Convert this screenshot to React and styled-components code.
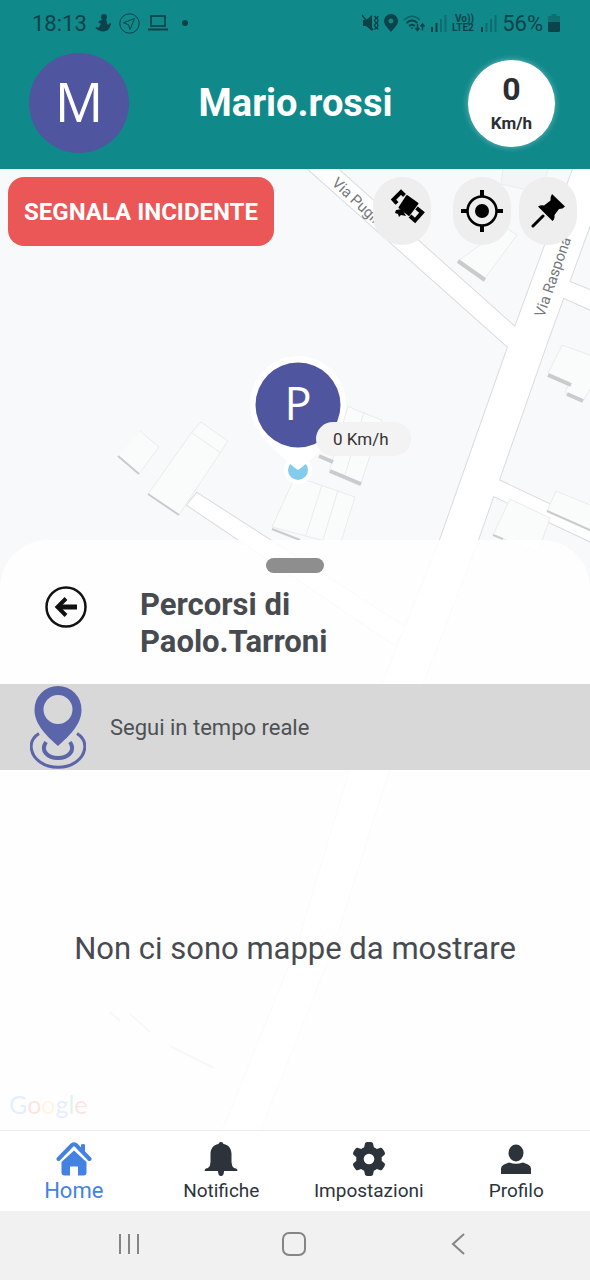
import React from "react";
import styled, { createGlobalStyle } from "styled-components";
import { FaGear } from "react-icons/fa6";

export default function App() {
  return (
    <>
      <GlobalStyle />
      <Screen>
        <Header>
          <StatusBar />
          <ProfileRow>
            <Avatar>M</Avatar>
            <UserName>Mario.rossi</UserName>
            <Speed>
              <SpeedValue>0</SpeedValue>
              <SpeedUnit>Km/h</SpeedUnit>
            </Speed>
          </ProfileRow>
        </Header>
        <MapArea>
          <MapBackdrop />
          <MapView>
            <Toolbar>
              <ReportButton type="button">SEGNALA INCIDENTE</ReportButton>
              <MapButtons>
                <MapButton type="button" aria-label="Satellite" $spaced>
                  <SatelliteIcon />
                </MapButton>
                <MapButton type="button" aria-label="La mia posizione">
                  <TargetIcon />
                </MapButton>
                <MapButton type="button" aria-label="Fissa">
                  <PinIcon />
                </MapButton>
              </MapButtons>
            </Toolbar>
            <UserMarker initial="P" speed="0 Km/h" />
          </MapView>
          <Sheet>
            <Grip />
            <SheetHead>
              <BackButton type="button" aria-label="Indietro">
                <BackIcon />
              </BackButton>
              <SheetTitle>Percorsi di Paolo.Tarroni</SheetTitle>
            </SheetHead>
            <FollowButton type="button">
              <FollowIcon />
              Segui in tempo reale
            </FollowButton>
            <EmptyText>Non ci sono mappe da mostrare</EmptyText>
          </Sheet>
        </MapArea>
        <TabBar>
          {tabs.map(({ label, Icon, active }) => (
            <Tab
              key={label}
              href="#"
              $active={active}
              aria-current={active ? "page" : undefined}
            >
              <Icon />
              {label}
            </Tab>
          ))}
        </TabBar>
        <SystemBar>
          <SystemButton type="button" aria-label="App recenti">
            <svg width="24" height="24" viewBox="0 0 24 24">
              <path d="M3 2v20M12 2v20M21 2v20" />
            </svg>
          </SystemButton>
          <SystemButton type="button" aria-label="Schermata principale">
            <svg width="24" height="24" viewBox="0 0 24 24">
              <rect x="1" y="1" width="22" height="22" rx="6" />
            </svg>
          </SystemButton>
          <SystemButton type="button" aria-label="Indietro">
            <svg width="24" height="24" viewBox="0 0 24 24">
              <path d="M17 2L6 12l11 10" />
            </svg>
          </SystemButton>
        </SystemBar>
      </Screen>
    </>
  );
}

function StatusBar() {
  return (
    <StatusRow>
      <StatusGroup $gap={8}>
        <span>18:13</span>
        <svg width="16" height="18" viewBox="0 0 16 18" fill="currentColor">
          <circle cx="9" cy="3" r="3" />
          <path d="M6 6l5-1 1 4 1 2 2-2 1 1-2 5c-2 3-9 3-11 1-2-1-3-2-2-3 1 0 2 0 3 1 0-2 1-3 2-4L3 8z" />
        </svg>
        <svg width="21" height="21" viewBox="0 0 21 21" fill="none" stroke="currentColor">
          <circle cx="10.5" cy="10.5" r="9.7" />
          <path d="M15.5 5.5L4.5 9.8l5 1.9 1.5 4.8z" />
        </svg>
        <svg width="20" height="16" viewBox="0 0 20 16" fill="none" stroke="currentColor">
          <rect x="3" y="1" width="14" height="10" strokeWidth="1.7" />
          <path d="M0 14.5h20" strokeWidth="2" />
        </svg>
        <Dot />
      </StatusGroup>
      <StatusGroup $gap={5}>
        <svg width="17" height="18" viewBox="0 0 17 18" fill="none" stroke="currentColor">
          <path d="M1 6h3l6-5v16l-6-5H1z" fill="currentColor" stroke="none" />
          <path d="M0 1l11 15" strokeWidth="1.5" />
          <path
            d="M12.5 2l1.5 2-1.5 2.5L14 9l-1.5 2.500 1.500 2-1.500 2M16 2l-1 2 1 2.500L15 9l1 2.500-1 2 1 2"
            strokeWidth="1.400"
          />
        </svg>
        <svg width="14" height="18" viewBox="0 0 14 18" fill="currentColor">
          <path
            fillRule="evenodd"
            d="M7 0a7 7 0 0 1 7 7c0 4-4 7-7 11-3-4-7-7-7-11a7 7 0 0 1 7-7zm0 4.500a2.500 2.500 0 1 0 0 5 2.500 2.500 0 0 0 0-5z"
          />
        </svg>
        <svg width="23" height="18" viewBox="0 0 23 18" fill="none" stroke="currentColor">
          <path d="M1 6q8-7.500 16 0" strokeWidth="1.500" opacity=".55" />
          <path d="M3.500 9q5.500-5 11 0M6 12q3-2.500 6 0" strokeWidth="1.900" />
          <path d="M7.500 13.500h3L9 15.500z" fill="currentColor" stroke="none" />
          <path
            d="M14.500 10v6M12.500 14l2 2.500 2-2.500M19.500 16.500v-6M17.500 12.500l2-2.500 2 2.500"
            strokeWidth="1.500"
          />
        </svg>
        <SignalIcon level={2} />
        <svg
          width="24"
          height="20"
          viewBox="0 0 24 20"
          fill="currentColor"
          fontFamily="Roboto, sans-serif"
          fontWeight="700"
          fontSize="10"
        >
          <text x="3" y="9">Vo))</text>
          <text x="0" y="18">LTE2</text>
        </svg>
        <SignalIcon level={1} />
        <span>56%</span>
        <svg width="12" height="18" viewBox="0 0 12 18" fill="currentColor">
          <path d="M3.500 0h5v2H12v6H0V2h3.500z" opacity=".35" />
          <path d="M0 8h12v8.500q0 1.500-1.500 1.500h-9Q0 18 0 16.500z" />
        </svg>
      </StatusGroup>
    </StatusRow>
  );
}

function SignalIcon({ level }) {
  return (
    <svg width="16" height="18" viewBox="0 0 16 18" fill="currentColor">
      {[5, 9, 13, 17].map((height, i) => (
        <rect
          key={height}
          x={i * 4.5}
          y={18 - height}
          width="2"
          height={height}
          opacity={i < level ? 1 : 0.4}
        />
      ))}
    </svg>
  );
}

function UserMarker({ initial, speed }) {
  return (
    <Marker>
      <svg width="98" height="132" viewBox="0 0 98 132">
        <circle cx="49" cy="115" r="14" fill="#fff" />
        <circle cx="49" cy="115" r="10" fill="#85cbec" />
        <path
          d="M49 1a48 48 0 0 1 48 48c0 20-12 34-25 46-8 7-14 14-23 20-9-6-15-13-23-20C13 83 1 69 1 49A48 48 0 0 1 49 1z"
          fill="#fff"
        />
        <circle cx="49" cy="50" r="42.500" fill="#4f559f" />
        <text
          x="49"
          y="65"
          fill="#fff"
          fontSize="45"
          fontFamily="Open Sans, sans-serif"
          textAnchor="middle"
        >
          {initial}
        </text>
      </svg>
      <MarkerSpeed>{speed}</MarkerSpeed>
    </Marker>
  );
}

let roads = [
  "M308 169h30l177 158 25 20h-32z",
  "M573 169L515 327 440 540 380 690 350 770 297 947 223 1130h37L333 947 387 776 478 540 499 480 548 340 590 225l10-30v-26z",
  "M560 278l40 16v20l-45-20z",
  "M490 476l110 52v18L485 492z",
  "M187 505l10-12 208 134-10 18z",
];

function MapBackdrop() {
  return (
    <Backdrop viewBox="0 169 590 961" preserveAspectRatio="xMidYMin slice">
      {/* outlines first, so that the junctions stay open */}
      <g fill="none" stroke="#d9dcdf" strokeWidth="2">
        {roads.map(d => (
          <path key={d} d={d} />
        ))}
      </g>
      <g fill="#fff">
        {roads.map(d => (
          <path key={d} d={d} />
        ))}
      </g>
      <g fill="#fafbfb" stroke="#eaecec">
        <path d="M140 431l19 16-20 27-21-18M201 422l27 19-49 74-31-21 44-62zM192 433l29 20" />
        <path d="M309 481l46 16-15 48-68-18 21-46zM322 485l-16 50M338 490l-15 50" />
        <path d="M348 406l8 4 26 10-22 66-31-14zM364 412l-20 66" />
        <path d="M503 169l-2 15 40 9 7-24" fill="#f4f5f7" />
        <path d="M505 227l12 8-34 46-25-20z" />
        <path d="M595 357l-33-12-14 28 21 9-4 11 18 8 12-20" />
        <path d="M510 499l40 19-12 34-45-17z" />
        <path d="M556 491l44 18v26l-53-24z" />
        <path d="M420 865l60 35M375 1045l50 22" />
      </g>
      <g stroke="#c9cccd" fill="none" strokeWidth="4">
        <path d="M458 261l27 19M548 375l23 10M567 394l16 7M330 471l31 13M319 456l14 6" />
        <path
          d="M148 494l31 21M118 456l21 18M272 529l28 11M493 535l10 4M547 511l45 20M110 1012l10 9M130 1014l20 18M170 1046l44 22"
          strokeWidth="2"
        />
      </g>
      <g fill="#74787c" fontFamily="Roboto, sans-serif" fontSize="15">
        <text transform="translate(331 184) rotate(43)">Via Puglia</text>
        <text transform="translate(544 318) rotate(-71)">Via Raspona</text>
      </g>
      <text x="9" y="1114" fontFamily="Lato, sans-serif" fontSize="25">
        <tspan fill="#4285f4">G</tspan>
        <tspan fill="#ea4335">o</tspan>
        <tspan fill="#fbbc05">o</tspan>
        <tspan fill="#4285f4">g</tspan>
        <tspan fill="#34a853">l</tspan>
        <tspan fill="#ea4335">e</tspan>
      </text>
    </Backdrop>
  );
}

function SatelliteIcon() {
  return (
    <svg width="56" height="56" viewBox="-17 -5 56 56">
      <path
        d="M16 8l10.500 7.500L18 27 8.500 19.500z"
        stroke="#000"
        strokeWidth="2"
        strokeLinejoin="round"
      />
      <path d="M5 22l6-1 4 7-5-1-2 2-1-3-3-1z" />
      <path
        d="M13.500 7.500L10 4 2.500 11.500 6 15.500M25.500 20l5.500 4.500L24 32.500 19 28"
        fill="none"
        stroke="#000"
        strokeWidth="4"
      />
    </svg>
  );
}

function TargetIcon() {
  return (
    <svg width="42" height="42" viewBox="0 0 42 42">
      <circle cx="21" cy="21" r="14.500" fill="none" stroke="#000" strokeWidth="2.500" />
      <circle cx="21" cy="21" r="7" />
      <path d="M21 0v7M21 35v7M0 21h7M35 21h7" stroke="#000" strokeWidth="4" />
    </svg>
  );
}

function PinIcon() {
  return (
    <svg width="34" height="34" viewBox="0 0 34 34">
      <path d="M21 0l13 12.500q-2 2.500-6 2.500l-4.500 6q.500 4-2 6L7 12.500q3-2 6-1l6.500-5q-.500-3.500 1.500-6.500z" />
      <path d="M12 22L2 32" stroke="#000" strokeWidth="3" strokeLinecap="round" />
    </svg>
  );
}

function BackIcon() {
  return (
    <svg width="42" height="42" viewBox="0 0 42 42" fill="none" stroke="#111">
      <circle cx="21" cy="21" r="19.500" strokeWidth="2.500" />
      <path d="M13 21h19" strokeWidth="5" />
      <path d="M21 12.500L12.500 21l8.500 8.500" strokeWidth="4" />
    </svg>
  );
}

function FollowIcon() {
  return (
    <svg width="56" height="84" viewBox="0 0 56 84" fill="none" stroke="#5b65aa">
      <path
        d="M28 1a23.500 23.500 0 0 1 23.500 24C51.500 40 38 52 28 61 18 52 4.500 40 4.500 25A23.500 23.500 0 0 1 28 1zm0 9a14.500 14.500 0 1 0 0 29 14.500 14.500 0 0 0 0-29z"
        fill="#5b65aa"
        fillRule="evenodd"
        stroke="none"
      />
      <path d="M9 48.500C-3 56 0 70 10 77c10 7 26 7 36 0s13-21 1-28.500" strokeWidth="3" />
      <path d="M16 57c-6 9 2 16 12 16s18-7 12-16" strokeWidth="4" />
    </svg>
  );
}

function HomeIcon() {
  return (
    <svg width="36" height="34" viewBox="0 0 36 34" fill="currentColor">
      <path d="M18 8.500L30.500 20v10.500q0 3-3 3H22v-9h-8v9H8.500q-3 0-3-3V20z" />
      <path
        d="M2.500 17L16 3q2-1.500 4 0l13.500 14"
        fill="none"
        stroke="currentColor"
        strokeWidth="4"
        strokeLinecap="round"
      />
      <path d="M25 2.500q2-1 4 0V12l-4-4z" />
    </svg>
  );
}

function BellIcon() {
  return (
    <svg width="34" height="34" viewBox="0 0 34 34" fill="currentColor">
      <path d="M17 0q2 0 2.500 2C25 3 27.500 7 27.500 12v8q0 4 2.500 6l2 .500q1.500.500 1.500 2.500H20q0 5-3 5t-3-5H.500q0-2 1.500-2.500l2-.500q2.500-2 2.500-6v-8C6.500 7 9 3 14.500 2 15 0 17 0 17 0z" />
    </svg>
  );
}

function SettingsIcon() {
  return <FaGear size={34} />;
}

function ProfileIcon() {
  return (
    <svg width="30" height="34" viewBox="0 0 30 34" fill="currentColor">
      <ellipse cx="15" cy="11" rx="7.500" ry="8.500" />
      <path d="M8 20.500q7 2.500 14 0l5 2q3 1.500 3 4V32H0v-5.500q0-2.500 3-4z" />
    </svg>
  );
}

let tabs = [
  { label: "Home", Icon: HomeIcon, active: true },
  { label: "Notifiche", Icon: BellIcon },
  { label: "Impostazioni", Icon: SettingsIcon },
  { label: "Profilo", Icon: ProfileIcon },
];

let GlobalStyle = createGlobalStyle`
  * {
    box-sizing: border-box;
  }

  body {
    margin: 0;
    font-family: Roboto, "Liberation Sans", sans-serif;
  }

  button {
    font: inherit;
    border: 0;
    padding: 0;
    cursor: pointer;
  }

  svg {
    display: block;
    flex-shrink: 0;
  }
`;

let Screen = styled.div`
  display: flex;
  flex-direction: column;
  min-height: 100vh;
`;

let Header = styled.header`
  background: #10898b;
`;

let StatusRow = styled.div`
  display: flex;
  align-items: center;
  justify-content: space-between;
  height: 46px;
  padding: 0 30px 0 32px;
  font-size: 22px;
  color: #0b4348;
`;

let StatusGroup = styled.div`
  display: flex;
  align-items: center;
  gap: ${props => props.$gap}px;
`;

let Dot = styled.span`
  width: 6px;
  height: 6px;
  margin-left: 6px;
  border-radius: 50%;
  background: currentColor;
`;

let ProfileRow = styled.div`
  display: flex;
  align-items: center;
  padding: 7px 35px 16px 29px;
`;

let Avatar = styled.div`
  display: flex;
  align-items: center;
  justify-content: center;
  width: 100px;
  height: 100px;
  padding-bottom: 5px;
  border-radius: 50%;
  font-family: "Open Sans", sans-serif;
  font-size: 54px;
  line-height: 1;
  color: #fff;
  background: #4f559f;
`;

let UserName = styled.h1`
  flex: 1;
  margin: 0;
  padding-right: 6px;
  font-size: 38px;
  font-weight: 700;
  text-align: center;
  color: #fff;
`;

let Speed = styled.div`
  display: flex;
  flex-direction: column;
  align-items: center;
  justify-content: center;
  gap: 8px;
  width: 87px;
  height: 87px;
  border-radius: 50%;
  color: #2b2e33;
  background: #fff;
  box-shadow: 0 0 6px rgba(255, 255, 255, 0.4);
`;

let SpeedValue = styled.span`
  font-size: 32px;
  font-weight: 700;
  line-height: 32px;
`;

let SpeedUnit = styled.span`
  font-size: 17px;
  font-weight: 700;
  line-height: 20px;
`;

let MapArea = styled.main`
  position: relative;
  display: flex;
  flex: 1;
  flex-direction: column;
  overflow: hidden;
  background: #f8f9fb;
`;

let Backdrop = styled.svg`
  position: absolute;
  inset: 0;
  width: 100%;
  height: 100%;
`;

let MapView = styled.section`
  position: relative;
  min-height: 371px;
`;

let Toolbar = styled.div`
  display: flex;
  justify-content: space-between;
  padding: 8px 13px 8px 8px;
`;

let ReportButton = styled.button`
  height: 69px;
  padding: 0 16px;
  border-radius: 16px;
  font-size: 24px;
  font-weight: 700;
  color: #fff;
  background: #eb5757;
`;

let MapButtons = styled.div`
  display: flex;
  gap: 8px;
`;

let MapButton = styled.button`
  display: flex;
  align-items: center;
  justify-content: center;
  width: 58px;
  height: 68px;
  margin-right: ${props => (props.$spaced ? "14px" : "0")};
  border-radius: 29px;
  background: #eee;
`;

let Marker = styled.div`
  position: absolute;
  top: 186px;
  left: 50%;
  margin-left: -46px;
`;

let MarkerSpeed = styled.span`
  position: absolute;
  top: 67px;
  left: 67px;
  padding: 0 22px 0 17px;
  border-radius: 17px;
  font-size: 17px;
  line-height: 34px;
  white-space: nowrap;
  color: #333;
  background: #f3f3f3;
`;

let Sheet = styled.section`
  position: relative;
  display: flex;
  flex: 1;
  flex-direction: column;
  padding-top: 18px;
  border-radius: 48px 48px 0 0;
  color: #474b50;
  background: rgba(255, 255, 255, 0.86);
`;

let Grip = styled.div`
  width: 58px;
  height: 15px;
  margin: 0 auto;
  border-radius: 8px;
  background: #8e8e8e;
`;

let SheetHead = styled.div`
  display: flex;
  align-items: flex-start;
  gap: 53px;
  padding: 13px 45px 24px;
`;

let BackButton = styled.button`
  background: none;
`;

let SheetTitle = styled.h2`
  max-width: 240px;
  margin: 0;
  font-size: 31px;
  font-weight: 700;
  line-height: 37px;
`;

let FollowButton = styled.button`
  display: flex;
  align-items: center;
  gap: 24px;
  height: 86px;
  padding: 0 30px;
  font-size: 22px;
  color: #4d5156;
  background: #d8d8d8;
`;

let EmptyText = styled.p`
  display: flex;
  flex: 1;
  align-items: center;
  justify-content: center;
  margin: 0;
  padding: 16px 16px 20px;
  font-size: 31px;
  text-align: center;
`;

let TabBar = styled.nav`
  display: grid;
  grid-template-columns: repeat(4, 1fr);
  height: 81px;
  border-top: 1px solid #ebebed;
  background: #fff;
`;

let Tab = styled.a`
  display: flex;
  flex-direction: column;
  align-items: center;
  justify-content: center;
  gap: 3px;
  padding-top: 2px;
  font-size: ${props => (props.$active ? "22px" : "19px")};
  line-height: 24px;
  text-decoration: none;
  color: ${props => (props.$active ? "#4482e2" : "#2d333b")};
`;

let SystemBar = styled.div`
  display: grid;
  grid-template-columns: repeat(3, 1fr);
  height: 69px;
  padding: 0 48px 3px 46px;
  background: #f1f1f1;
`;

let SystemButton = styled.button`
  display: flex;
  align-items: center;
  justify-content: center;
  background: none;

  svg {
    fill: none;
    stroke: #858585;
    stroke-width: 2px;
  }
`;
